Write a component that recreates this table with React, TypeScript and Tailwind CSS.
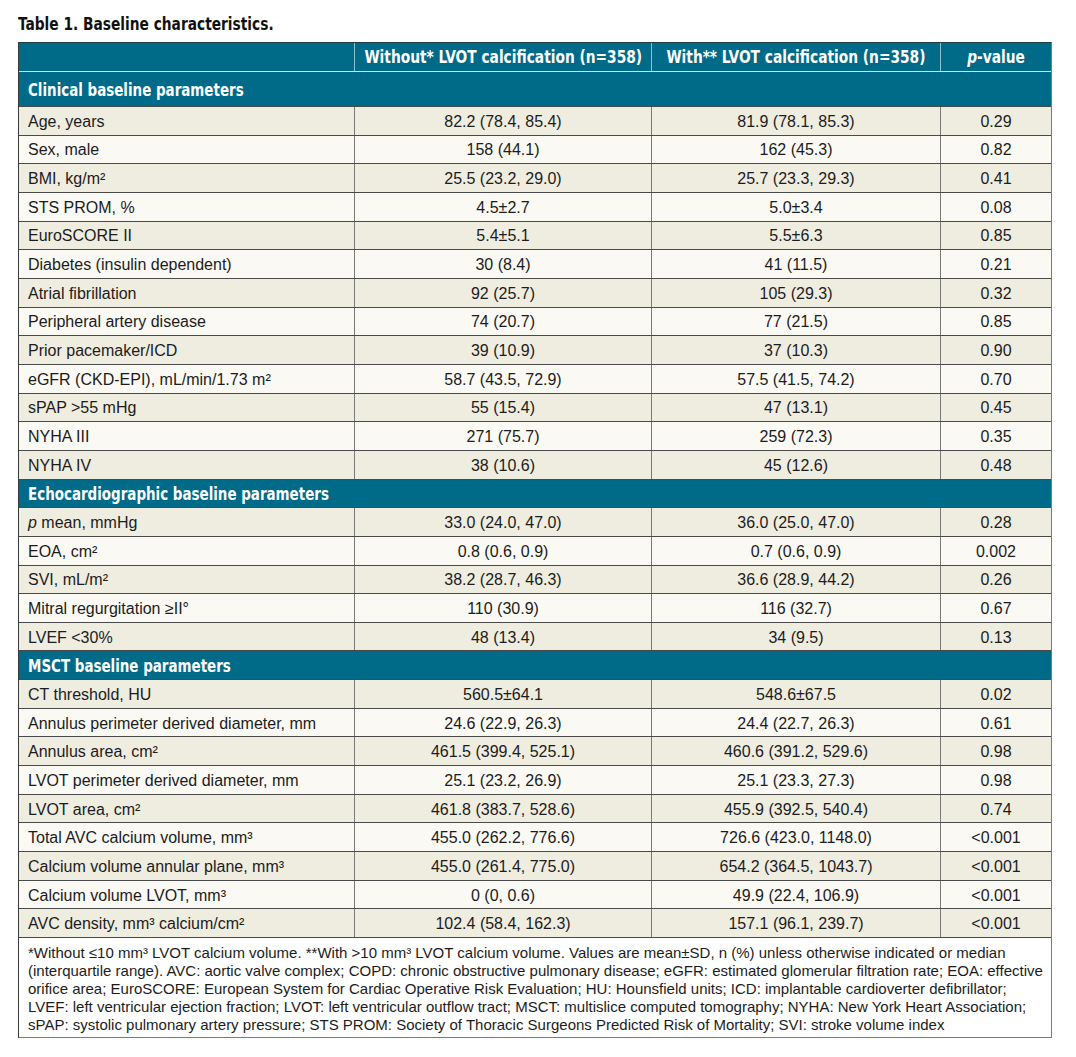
import React from "react";

type Row = { label: React.ReactNode; a: string; b: string; p: string };

const clinical: Row[] = [
  { label: "Age, years", a: "82.2 (78.4, 85.4)", b: "81.9 (78.1, 85.3)", p: "0.29" },
  { label: "Sex, male", a: "158 (44.1)", b: "162 (45.3)", p: "0.82" },
  { label: "BMI, kg/m²", a: "25.5 (23.2, 29.0)", b: "25.7 (23.3, 29.3)", p: "0.41" },
  { label: "STS PROM, %", a: "4.5±2.7", b: "5.0±3.4", p: "0.08" },
  { label: "EuroSCORE II", a: "5.4±5.1", b: "5.5±6.3", p: "0.85" },
  { label: "Diabetes (insulin dependent)", a: "30 (8.4)", b: "41 (11.5)", p: "0.21" },
  { label: "Atrial fibrillation", a: "92 (25.7)", b: "105 (29.3)", p: "0.32" },
  { label: "Peripheral artery disease", a: "74 (20.7)", b: "77 (21.5)", p: "0.85" },
  { label: "Prior pacemaker/ICD", a: "39 (10.9)", b: "37 (10.3)", p: "0.90" },
  { label: "eGFR (CKD-EPI), mL/min/1.73 m²", a: "58.7 (43.5, 72.9)", b: "57.5 (41.5, 74.2)", p: "0.70" },
  { label: "sPAP >55 mHg", a: "55 (15.4)", b: "47 (13.1)", p: "0.45" },
  { label: "NYHA III", a: "271 (75.7)", b: "259 (72.3)", p: "0.35" },
  { label: "NYHA IV", a: "38 (10.6)", b: "45 (12.6)", p: "0.48" },
];

const echo: Row[] = [
  {
    label: (
      <span>
        <span className="italic">p</span> mean, mmHg
      </span>
    ),
    a: "33.0 (24.0, 47.0)",
    b: "36.0 (25.0, 47.0)",
    p: "0.28",
  },
  { label: "EOA, cm²", a: "0.8 (0.6, 0.9)", b: "0.7 (0.6, 0.9)", p: "0.002" },
  { label: "SVI, mL/m²", a: "38.2 (28.7, 46.3)", b: "36.6 (28.9, 44.2)", p: "0.26" },
  { label: "Mitral regurgitation ≥II°", a: "110 (30.9)", b: "116 (32.7)", p: "0.67" },
  { label: "LVEF <30%", a: "48 (13.4)", b: "34 (9.5)", p: "0.13" },
];

const msct: Row[] = [
  { label: "CT threshold, HU", a: "560.5±64.1", b: "548.6±67.5", p: "0.02" },
  { label: "Annulus perimeter derived diameter, mm", a: "24.6 (22.9, 26.3)", b: "24.4 (22.7, 26.3)", p: "0.61" },
  { label: "Annulus area, cm²", a: "461.5 (399.4, 525.1)", b: "460.6 (391.2, 529.6)", p: "0.98" },
  { label: "LVOT perimeter derived diameter, mm", a: "25.1 (23.2, 26.9)", b: "25.1 (23.3, 27.3)", p: "0.98" },
  { label: "LVOT area, cm²", a: "461.8 (383.7, 528.6)", b: "455.9 (392.5, 540.4)", p: "0.74" },
  { label: "Total AVC calcium volume, mm³", a: "455.0 (262.2, 776.6)", b: "726.6 (423.0, 1148.0)", p: "<0.001" },
  { label: "Calcium volume annular plane, mm³", a: "455.0 (261.4, 775.0)", b: "654.2 (364.5, 1043.7)", p: "<0.001" },
  { label: "Calcium volume LVOT, mm³", a: "0 (0, 0.6)", b: "49.9 (22.4, 106.9)", p: "<0.001" },
  { label: "AVC density, mm³ calcium/cm²", a: "102.4 (58.4, 162.3)", b: "157.1 (96.1, 239.7)", p: "<0.001" },
];

const condensed = "font-['DejaVu_Sans_Condensed','Liberation_Sans_Narrow','Liberation_Sans',sans-serif]";

function DataRow({ row, i }: { row: Row; i: number }) {
  const bg = i % 2 === 0 ? "bg-[#efece0]" : "bg-[#faf9f4]";
  return (
    <div className={`flex h-[28.66px] border-b border-[#4a4a4a] ${bg}`}>
      <div className="w-[336px] shrink-0 flex items-center pl-[9px] pt-[2px] border-r border-[#7a7a7a]">
        <span>{row.label}</span>
      </div>
      <div className="w-[297px] shrink-0 flex items-center justify-center pt-[2px] border-r border-[#7a7a7a]">{row.a}</div>
      <div className="w-[289px] shrink-0 flex items-center justify-center pt-[2px] border-r border-[#7a7a7a]">{row.b}</div>
      <div className="flex-1 flex items-center justify-center pt-[2px]">{row.p}</div>
    </div>
  );
}

function SectionText({ children }: { children: React.ReactNode }) {
  return (
    <span className={`inline-block origin-left scale-x-[0.83] whitespace-nowrap text-white font-bold text-[18px] ${condensed}`}>
      {children}
    </span>
  );
}

function Section({ title }: { title: string }) {
  return (
    <div className="h-[28.66px] flex items-center pl-[9px] pt-[1px] bg-[#006a89] border-b border-[#4a4a4a]">
      <SectionText>{title}</SectionText>
    </div>
  );
}

function HeadText({ children }: { children: React.ReactNode }) {
  return (
    <span className={`inline-block origin-center scale-x-[0.9] whitespace-nowrap text-white font-bold text-[17px] ${condensed}`}>
      {children}
    </span>
  );
}

export default function App() {
  return (
    <div className="w-[1076px] h-[1057px] bg-white text-[#1c1c1c] font-['Liberation_Sans',Arial,sans-serif] text-[16px] leading-none">
      <div className="pl-[18px] pt-[14px]">
        <div className="h-[28px] pt-[1px]">
          <span className={`inline-block origin-left scale-x-[0.85] whitespace-nowrap text-[18px] font-bold text-[#111] ${condensed}`}>
            Table 1. Baseline characteristics.
          </span>
        </div>
        <div className="w-[1034px] border-l border-[#3a3a3a] border-r border-r-[#7a7a7a]">
          {/* header */}
          <div className="flex h-[30px] bg-[#006a89] border-t border-[#1e3d48] border-b border-b-[#cfe2e8]">
            <div className="w-[336px] shrink-0 border-r border-[#8fbfcf]" />
            <div className="w-[297px] shrink-0 flex items-center justify-center border-r border-[#8fbfcf]">
              <HeadText>Without* LVOT calcification (n=358)</HeadText>
            </div>
            <div className="w-[289px] shrink-0 flex items-center justify-center border-r border-[#8fbfcf]">
              <HeadText>With** LVOT calcification (n=358)</HeadText>
            </div>
            <div className="flex-1 flex items-center justify-center">
              <HeadText>
                <span className="italic">p</span>-value
              </HeadText>
            </div>
          </div>
          <div className="h-[35px] flex items-center pl-[9px] pt-[1px] bg-[#006a89] border-b border-[#4a4a4a]">
            <SectionText>Clinical baseline parameters</SectionText>
          </div>
          {clinical.map((r, i) => (
            <DataRow key={"c" + i} row={r} i={i} />
          ))}
          <Section title="Echocardiographic baseline parameters" />
          {echo.map((r, i) => (
            <DataRow key={"e" + i} row={r} i={i} />
          ))}
          <Section title="MSCT baseline parameters" />
          {msct.map((r, i) => (
            <DataRow key={"m" + i} row={r} i={i} />
          ))}
          <div className="bg-white border-b border-[#7a7a7a] pl-[9px] pt-[6px] pb-[3px] text-[15px] leading-[18px] whitespace-nowrap">
            <div>*Without ≤10 mm³ LVOT calcium volume. **With &gt;10 mm³ LVOT calcium volume. Values are mean±SD, n (%) unless otherwise indicated or median</div>
            <div>(interquartile range). AVC: aortic valve complex; COPD: chronic obstructive pulmonary disease; eGFR: estimated glomerular filtration rate; EOA: effective</div>
            <div>orifice area; EuroSCORE: European System for Cardiac Operative Risk Evaluation; HU: Hounsfield units; ICD: implantable cardioverter defibrillator;</div>
            <div>LVEF: left ventricular ejection fraction; LVOT: left ventricular outflow tract; MSCT: multislice computed tomography; NYHA: New York Heart Association;</div>
            <div>sPAP: systolic pulmonary artery pressure; STS PROM: Society of Thoracic Surgeons Predicted Risk of Mortality; SVI: stroke volume index</div>
          </div>
        </div>
      </div>
    </div>
  );
}
